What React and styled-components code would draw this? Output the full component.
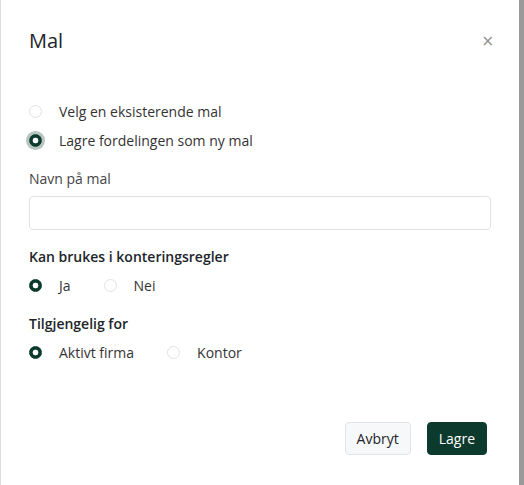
import React, { useState } from 'react';
import styled, { createGlobalStyle } from 'styled-components';

const GlobalStyle = createGlobalStyle`
  * { box-sizing: border-box; }
  body {
    margin: 0;
    background: #9a9a9a;
    font-family: "Open Sans", "Liberation Sans", sans-serif;
    color: #212529;
  }
`;

const Backdrop = styled.div`
  width: 524px;
  height: 485px;
  display: flex;
`;

const Modal = styled.div`
  width: 519px;
  height: 485px;
  background: #fff;
  border-left: 1px solid #d9dde2;
  display: flex;
  flex-direction: column;
`;

const Header = styled.div`
  display: flex;
  align-items: center;
  justify-content: space-between;
  padding: 26px 25px 0 28px;
`;

const Title = styled.h2`
  margin: 0;
  font-size: 20px;
  font-weight: 400;
  line-height: 30px;
  color: #212529;
`;

const Close = styled.button`
  border: none;
  background: none;
  padding: 0;
  font-size: 15px;
  line-height: 15px;
  color: #909090;
  cursor: pointer;
  font-family: "DejaVu Sans", sans-serif;
`;

const Body = styled.div`
  padding: 0 28px;
  display: flex;
  flex-direction: column;
  flex: 1;
`;

const Stack = styled.div`
  display: flex;
  flex-direction: column;
  gap: 8px;
  margin-top: ${p => p.$top || 0}px;
`;

const Inline = styled.div`
  display: flex;
  align-items: center;
  gap: 33px;
  margin-top: ${p => p.$top || 0}px;
`;

const Option = styled.label`
  display: flex;
  align-items: center;
  gap: 17px;
  font-size: 14px;
  line-height: 21px;
  color: #333;
  cursor: pointer;
`;

const Radio = styled.input.attrs({ type: 'radio' })`
  appearance: none;
  margin: 0;
  width: 13px;
  height: 13px;
  border-radius: 50%;
  border: 1px solid #dfe2e6;
  background: #fff;
  flex-shrink: 0;

  &:checked {
    border-color: #0c3a2c;
    background: radial-gradient(circle, #fff 0 2.6px, #0c3a2c 3.2px);
  }

  ${p => p.$focused && `
    box-shadow: 0 0 0 3px #b7c4bf;
  `}
`;

const FieldLabel = styled.div`
  margin-top: 17px;
  font-size: 14px;
  line-height: 21px;
  color: #444;
`;

const TextInput = styled.input`
  margin-top: 7px;
  width: 462px;
  height: 34px;
  border: 1px solid #dee2e6;
  border-radius: 4px;
  font-size: 14px;
  padding: 0 10px;
  font-family: inherit;
  outline: none;
`;

const SectionTitle = styled.div`
  margin-top: ${p => p.$top || 0}px;
  font-size: 14px;
  font-weight: 600;
  line-height: 21px;
  color: #212529;
`;

const Footer = styled.div`
  display: flex;
  justify-content: flex-end;
  gap: 16px;
  padding: 0 32px 30px 0;
`;

const Button = styled.button`
  height: 33px;
  padding: 0 11px;
  font-family: inherit;
  font-size: 14px;
  border-radius: 4px;
  cursor: pointer;
  border: 1px solid ${p => (p.$primary ? '#0c3a2c' : '#e1e4e8')};
  background: ${p => (p.$primary ? '#0c3a2c' : '#f7f8fa')};
  color: ${p => (p.$primary ? '#fff' : '#212529')};
`;

export default function App() {
  const [mode, setMode] = useState('ny');
  const [regler, setRegler] = useState('ja');
  const [scope, setScope] = useState('firma');

  return (
    <>
      <GlobalStyle />
      <Backdrop>
        <Modal>
          <Header>
            <Title>Mal</Title>
            <Close aria-label="Lukk">×</Close>
          </Header>
          <Body>
            <Stack $top={45}>
              <Option>
                <Radio name="mode" checked={mode === 'eks'} onChange={() => setMode('eks')} />
                Velg en eksisterende mal
              </Option>
              <Option>
                <Radio name="mode" $focused checked={mode === 'ny'} onChange={() => setMode('ny')} />
                Lagre fordelingen som ny mal
              </Option>
            </Stack>

            <FieldLabel>Navn på mal</FieldLabel>
            <TextInput type="text" />

            <SectionTitle $top={16}>Kan brukes i konteringsregler</SectionTitle>
            <Inline $top={8}>
              <Option>
                <Radio name="regler" checked={regler === 'ja'} onChange={() => setRegler('ja')} />
                Ja
              </Option>
              <Option>
                <Radio name="regler" checked={regler === 'nei'} onChange={() => setRegler('nei')} />
                Nei
              </Option>
            </Inline>

            <SectionTitle $top={17}>Tilgjengelig for</SectionTitle>
            <Inline $top={8}>
              <Option>
                <Radio name="scope" checked={scope === 'firma'} onChange={() => setScope('firma')} />
                Aktivt firma
              </Option>
              <Option>
                <Radio name="scope" checked={scope === 'kontor'} onChange={() => setScope('kontor')} />
                Kontor
              </Option>
            </Inline>
          </Body>
          <Footer>
            <Button>Avbryt</Button>
            <Button $primary>Lagre</Button>
          </Footer>
        </Modal>
      </Backdrop>
    </>
  );
}
